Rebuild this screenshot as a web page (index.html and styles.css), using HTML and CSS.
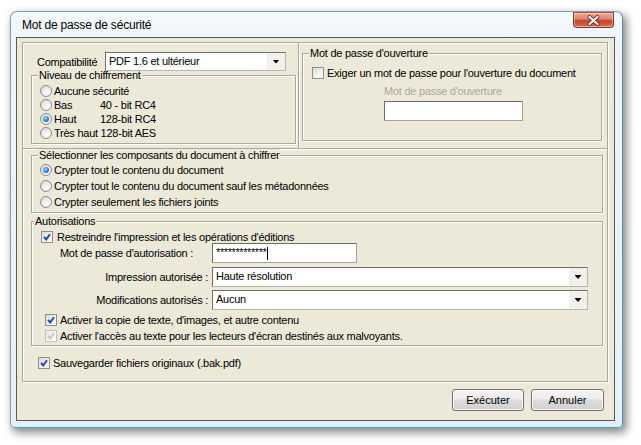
FILE: index.html
```html
<!DOCTYPE html>
<html lang="fr">
<head>
<meta charset="utf-8">
<title>Mot de passe de sécurité</title>
<link rel="stylesheet" href="styles.css">
</head>
<body>
<div class="window">
  <div class="titlebar">
    <span class="title">Mot de passe de sécurité</span>
    <div class="close">
      <svg width="13" height="11" viewBox="0 0 13 11"><path d="M2.5 2 L10.5 9 M10.5 2 L2.5 9" stroke="#6b2a1e" stroke-width="3.8" stroke-linecap="round"/><path d="M2.5 2 L10.5 9 M10.5 2 L2.5 9" stroke="#fff" stroke-width="2.2" stroke-linecap="round"/></svg>
    </div>
  </div>
  <div class="client">
    <div class="frame">
      <div class="top">
        <div class="pane-left">
          <div class="compat">
            <span class="compat-label">Compatibilité</span>
            <div class="select w-compat"><span class="select-text">PDF 1.6 et ultérieur</span><span class="select-btn"><span class="tri"></span></span></div>
          </div>
          <div class="group g-niveau">
            <span class="legend">Niveau de chiffrement</span>
            <div class="opts opts-niveau">
              <div class="opt"><span class="radio"></span><span class="lbl">Aucune sécurité</span></div>
              <div class="opt"><span class="radio"></span><span class="lbl lvl">Bas</span><span>40 - bit RC4</span></div>
              <div class="opt"><span class="radio on"></span><span class="lbl lvl">Haut</span><span>128-bit RC4</span></div>
              <div class="opt"><span class="radio"></span><span class="lbl">Très haut 128-bit AES</span></div>
            </div>
          </div>
        </div>
        <div class="pane-right">
          <div class="group g-ouverture">
            <span class="legend">Mot de passe d'ouverture</span>
            <div class="chk-row r-exiger"><span class="check"></span><span class="lbl">Exiger un mot de passe pour l'ouverture du document</span></div>
            <div class="ouv-field">
              <div class="disabled-label">Mot de passe d'ouverture</div>
              <div class="textbox w-ouv"></div>
            </div>
          </div>
        </div>
      </div>
      <div class="bottom">
        <div class="group g-select">
          <span class="legend">Sélectionner les composants du document à chiffrer</span>
          <div class="opts opts-select">
            <div class="opt"><span class="radio on"></span><span class="lbl">Crypter tout le contenu du document</span></div>
            <div class="opt"><span class="radio"></span><span class="lbl">Crypter tout le contenu du document sauf les métadonnées</span></div>
            <div class="opt"><span class="radio"></span><span class="lbl">Crypter seulement les fichiers joints</span></div>
          </div>
        </div>
        <div class="group g-autor">
          <span class="legend">Autorisations</span>
          <div class="autor-body">
            <div class="chk-row r-restreindre"><span class="check"><svg width="8" height="8" viewBox="0 0 8 8"><path d="M1 4 L3.2 6.4 L7 1.2" fill="none" stroke="#2146c0" stroke-width="1.9"/></svg></span><span class="lbl">Restreindre l'impression et les opérations d'éditions</span></div>
            <div class="field-row r-pw">
              <span class="field-label pw-label">Mot de passe d'autorisation :</span>
              <div class="textbox w-pw"><span class="pw">*************</span><span class="caret"></span></div>
            </div>
            <div class="field-row r-impr">
              <span class="field-label">Impression autorisée :</span>
              <div class="select w-wide"><span class="select-text">Haute résolution</span><span class="select-btn"><span class="tri"></span></span></div>
            </div>
            <div class="field-row r-modif">
              <span class="field-label">Modifications autorisés :</span>
              <div class="select w-wide"><span class="select-text">Aucun</span><span class="select-btn"><span class="tri"></span></span></div>
            </div>
            <div class="chk-row r-copie"><span class="check"><svg width="8" height="8" viewBox="0 0 8 8"><path d="M1 4 L3.2 6.4 L7 1.2" fill="none" stroke="#2146c0" stroke-width="1.9"/></svg></span><span class="lbl">Activer la copie de texte, d'images, et autre contenu</span></div>
            <div class="chk-row r-acces"><span class="check disabled"><svg width="8" height="8" viewBox="0 0 8 8"><path d="M1 4 L3.2 6.4 L7 1.2" fill="none" stroke="#c4c4c4" stroke-width="1.9"/></svg></span><span class="lbl">Activer l'accès au texte pour les lecteurs d'écran destinés aux malvoyants.</span></div>
          </div>
        </div>
        <div class="chk-row r-sauv"><span class="check"><svg width="8" height="8" viewBox="0 0 8 8"><path d="M1 4 L3.2 6.4 L7 1.2" fill="none" stroke="#2146c0" stroke-width="1.9"/></svg></span><span class="lbl">Sauvegarder fichiers originaux (.bak.pdf)</span></div>
      </div>
    </div>
    <div class="buttons">
      <div class="btn">Exécuter</div>
      <div class="btn btn-cancel">Annuler</div>
    </div>
  </div>
</div>
</body>
</html>
```

FILE: styles.css
```css
* { box-sizing: border-box; }
html, body { margin: 0; padding: 0; }
body {
  width: 641px;
  height: 445px;
  overflow: hidden;
  background: #fff;
  font-family: "Liberation Sans", Arial, sans-serif;
  font-size: 11px;
  line-height: 14px;
  letter-spacing: -0.25px;
  color: #000;
}

/* window chrome */
.window {
  margin: 11px 0 0 10px;
  width: 613px;
  height: 417px;
  border: 1px solid #8d9aa8;
  border-right-color: #4d8fb3;
  border-bottom-color: #2fa6d2;
  border-radius: 7px 7px 5px 5px;
  background: linear-gradient(#f6fafd 0, #edf5fa 30px, #e4f0f8 100%);
  box-shadow: 3px 4px 8px 1px rgba(0, 0, 0, 0.45);
  display: flex;
  flex-direction: column;
}
.titlebar {
  height: 25px;
  flex: none;
  display: flex;
  justify-content: space-between;
  align-items: flex-start;
}
.title {
  padding: 7px 0 0 11px;
  font-size: 12px;
  line-height: 13px;
  letter-spacing: -0.2px;
}
.close {
  width: 41px;
  height: 16px;
  margin-right: 8px;
  border: 1px solid #833d2e;
  border-top-color: #a65444;
  border-radius: 0 0 4px 4px;
  background: linear-gradient(#eaaa9c 0, #dc8a76 40%, #c4452b 55%, #cf5d43 85%, #e08a70 100%);
  box-shadow: inset 0 0 0 1px rgba(255, 255, 255, 0.35);
  display: grid;
  place-items: center;
}
.close svg { display: block; }

.client {
  flex: none;
  width: 599px;
  height: 384px;
  margin-left: 5px;
  border: 1px solid #5a5a5a;
  background: #ece9d8;
  padding: 4px 6px 0 5px;
}

/* etched frame */
.frame {
  height: 340px;
  border: 1px solid #aca899;
  box-shadow: inset 1px 1px #fff, 1px 1px #fff;
  display: flex;
  flex-direction: column;
}
.top {
  height: 106px;
  flex: none;
  display: flex;
  border-bottom: 1px solid #aca899;
  box-shadow: 0 1px #fff;
}
.pane-left {
  width: 276px;
  border-right: 1px solid #aca899;
  padding: 9px 2px 0 8px;
}
.pane-right {
  flex: 1;
  box-shadow: inset 1px 0 #fff;
  padding: 10px 5px 0 3px;
}
.bottom {
  flex: 1;
  padding: 6px 4px 0 8px;
}

/* group boxes */
.group {
  border: 1px solid #aca899;
  box-shadow: inset 1px 1px #fff, 1px 1px #fff;
}
.legend {
  display: block;
  width: max-content;
  margin: -7px 0 0 6px;
  padding: 0 1px;
  line-height: 13px;
  background: #ece9d8;
}

/* compat */
.compat { display: flex; align-items: center; height: 19px; }
.compat-label { width: 68px; margin-left: 6px; flex: none; }
.w-compat { width: 181px; height: 19px; }

.g-niveau { margin-top: 4px; width: 265px; }
.opts-niveau { padding: 2px 0 3px 8px; }
.opts-niveau .opt { height: 14px; }

.opt { display: flex; align-items: center; }
.opt .radio { margin-right: 2px; }
.lvl { width: 46px; }

.g-ouverture { width: 300px; padding: 0 0 19px 9px; }
.g-ouverture .legend { margin-left: -3px; }
.r-exiger { margin-top: 6px; }
.ouv-field { margin: 4px 0 0 72px; }
.disabled-label { color: #aca899; height: 14px; }
.w-ouv { width: 139px; height: 20px; margin-top: 3px; }

.g-select { }
.opts-select { padding: 0 0 2px 8px; }
.opts-select .opt { height: 16px; }

.g-autor { margin-top: 8px; }
.g-autor .legend { margin-left: 2px; }
.autor-body { padding: 2px 0 2px 0; }

.chk-row { display: flex; align-items: center; height: 14px; }
.chk-row .check { margin-right: 3px; }
.r-restreindre { padding-left: 9px; }
.r-restreindre .check { margin-right: 4px; }
.r-copie { padding-left: 13px; margin-top: 3px; }
.r-acces { padding-left: 13px; margin-top: 2px; }
.r-sauv { padding-left: 7px; margin-top: 10px; }

.field-row { display: flex; align-items: center; height: 20px; }
.r-pw { margin-top: -1px; }
.r-impr { margin-top: 4px; }
.r-modif { margin-top: 3px; }
.field-label { width: 176px; text-align: right; margin-right: 4px; flex: none; }
.pw-label { padding-right: 15px; }
.w-pw { width: 145px; height: 20px; display: flex; align-items: center; }
.w-wide { width: 376px; height: 20px; }

/* controls */
.radio {
  width: 12px;
  height: 12px;
  flex: none;
  border-radius: 50%;
  border: 1px solid #8d8d8d;
  background: radial-gradient(circle at 68% 70%, #ffffff 0%, #f1f1f1 35%, #cfcfcf 100%);
  display: grid;
  place-items: center;
}
.radio.on::after {
  content: "";
  width: 6px;
  height: 6px;
  border-radius: 50%;
  background: radial-gradient(circle at 40% 35%, #9fdcff 0%, #2a80d8 55%, #0d4a9e 100%);
}
.check {
  width: 12px;
  height: 12px;
  flex: none;
  border: 1px solid #8e8f8f;
  background: linear-gradient(135deg, #d9d9d6 0%, #f2f2f0 60%, #ffffff 100%);
  display: grid;
  place-items: center;
}
.check.disabled { border-color: #c2c2bc; background: linear-gradient(135deg, #ebebe8, #fbfbfa); }
.check svg { display: block; }

.select {
  display: flex;
  background: #fff;
  border: 1px solid;
  border-color: #6f6f6f #b9b7ab #b9b7ab #6f6f6f;
}
.select-text { flex: 1; padding-left: 3px; line-height: 17px; }
.select-btn {
  width: 18px;
  flex: none;
  background: #f1f0ec;
  display: grid;
  place-items: center;
}
.tri {
  width: 7px;
  height: 4px;
  background: #000;
  clip-path: polygon(0 0, 100% 0, 50% 100%);
}
.textbox {
  background: #fff;
  border: 1px solid;
  border-color: #6c6c6c #a3a3a3 #a3a3a3 #6c6c6c;
}
.pw {
  padding-left: 3px;
  letter-spacing: -0.4px;
  line-height: 12px;
  align-self: flex-start;
  margin-top: 2px;
}
.caret {
  width: 1px;
  height: 13px;
  background: #000;
  margin-left: 1px;
}

.buttons {
  display: flex;
  justify-content: flex-end;
  gap: 7px;
  margin: 7px 4px 0 0;
}
.btn {
  width: 72px;
  height: 22px;
  border: 1px solid #707070;
  border-radius: 3px;
  background: linear-gradient(#f4f4f4 0%, #ececec 45%, #dcdcdc 50%, #cfcfcf 100%);
  box-shadow: inset 0 0 0 1px #fbfbfb;
  display: grid;
  place-items: center;
  letter-spacing: 0;
}
.btn-cancel { width: 73px; }
```
